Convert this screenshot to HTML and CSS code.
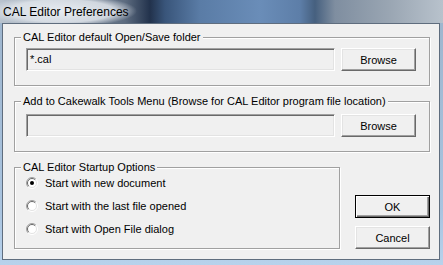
FILE: index.html
```html
<!DOCTYPE html>
<html>
<head>
<meta charset="utf-8">
<link rel="stylesheet" href="styles.css">
</head>
<body>
<div class="window">
  <div class="titlebar"><span class="title">CAL Editor Preferences</span></div>
  <div class="client">
    <div class="group g1">
      <div class="glabel">CAL Editor default Open/Save folder</div>
      <div class="row r1">
        <div class="textbox">*.cal</div>
        <button class="btn">Browse</button>
      </div>
    </div>
    <div class="group g2">
      <div class="glabel">Add to Cakewalk Tools Menu (Browse for CAL Editor program file location)</div>
      <div class="row r2">
        <div class="textbox"></div>
        <button class="btn">Browse</button>
      </div>
    </div>
    <div class="bottom">
      <div class="group g3">
        <div class="glabel">CAL Editor Startup Options</div>
        <div class="radios">
          <div class="radio">
            <svg width="12" height="12" viewBox="0 0 12 12"><circle cx="6" cy="6" r="5" fill="#fff"/><path d="M9.9 2.1A5.5 5.5 0 0 0 2.1 9.9" fill="none" stroke="#a0a0a0"/><path d="M2.1 9.9A5.5 5.5 0 0 0 9.9 2.1" fill="none" stroke="#fff"/><path d="M9.2 2.8A4.5 4.5 0 0 0 2.8 9.2" fill="none" stroke="#696969"/><path d="M2.8 9.2A4.5 4.5 0 0 0 9.2 2.8" fill="none" stroke="#e3e3e3"/><circle cx="6" cy="6" r="2" fill="#000"/></svg>
            <span>Start with new document</span>
          </div>
          <div class="radio">
            <svg width="12" height="12" viewBox="0 0 12 12"><circle cx="6" cy="6" r="5" fill="#fff"/><path d="M9.9 2.1A5.5 5.5 0 0 0 2.1 9.9" fill="none" stroke="#a0a0a0"/><path d="M2.1 9.9A5.5 5.5 0 0 0 9.9 2.1" fill="none" stroke="#fff"/><path d="M9.2 2.8A4.5 4.5 0 0 0 2.8 9.2" fill="none" stroke="#696969"/><path d="M2.8 9.2A4.5 4.5 0 0 0 9.2 2.8" fill="none" stroke="#e3e3e3"/></svg>
            <span>Start with the last file opened</span>
          </div>
          <div class="radio">
            <svg width="12" height="12" viewBox="0 0 12 12"><circle cx="6" cy="6" r="5" fill="#fff"/><path d="M9.9 2.1A5.5 5.5 0 0 0 2.1 9.9" fill="none" stroke="#a0a0a0"/><path d="M2.1 9.9A5.5 5.5 0 0 0 9.9 2.1" fill="none" stroke="#fff"/><path d="M9.2 2.8A4.5 4.5 0 0 0 2.8 9.2" fill="none" stroke="#696969"/><path d="M2.8 9.2A4.5 4.5 0 0 0 9.2 2.8" fill="none" stroke="#e3e3e3"/></svg>
            <span>Start with Open File dialog</span>
          </div>
        </div>
      </div>
      <div class="actions">
        <button class="btn default">OK</button>
        <button class="btn">Cancel</button>
      </div>
    </div>
  </div>
</div>
</body>
</html>
```
FILE: styles.css
```css
html, body {
  margin: 0;
  padding: 0;
}
body {
  width: 443px;
  height: 265px;
  overflow: hidden;
  background: linear-gradient(180deg, #9db4cc 0%, #a9c4e0 80%, #b8d2ec 100%);
  font-family: "Liberation Sans", Arial, sans-serif;
  font-size: 11px;
  color: #000;
}
.window {
  height: 265px;
  display: flex;
  flex-direction: column;
}
.titlebar {
  flex: none;
  height: 23px;
  padding-left: 3px;
  display: flex;
  align-items: center;
  background:
    radial-gradient(ellipse 75px 16px at 62px 11px, rgba(236,240,245,0.95) 0%, rgba(225,230,236,0.85) 70%, rgba(225,230,236,0) 100%),
    linear-gradient(90deg, #b9c3ce 0px, #5d6c80 125px, #22324c 150px, #39557a 165px, #5a7ca6 200px, #6a8db8 260px, #5d7ea8 300px, #46607f 315px, #7f8ea0 335px, #9aa6b3 390px, #b8c2cc 443px);
}
.title {
  font-family: "Liberation Sans", Arial, sans-serif;
  font-size: 12px;
  color: #000;
  line-height: 16px;
}
.client {
  flex: 1;
  margin: 0 3px 5px 2px;
  border: 1px solid #5f6d7e;
  background: #f0f0f0;
  padding: 13px 9px 9px 11px;
}
.group {
  border: 1px solid #a0a0a0;
  box-shadow: inset 1px 1px #fff, 1px 1px #fff;
}
.glabel {
  margin: -7px 0 0 6px;
  padding: 0 2px;
  width: fit-content;
  background: #f0f0f0;
  line-height: 13px;
  white-space: nowrap;
}
.row {
  display: flex;
  align-items: flex-start;
  gap: 6px;
  padding: 0 13px 14px 11px;
}
.r1 { margin-top: 4px; }
.g2 { margin-top: 15px; }
.r2 { margin-top: 6px; }
.textbox {
  box-sizing: border-box;
  width: 309px;
  height: 23px;
  border: 1px solid;
  border-color: #a0a0a0 #fff #fff #a0a0a0;
  box-shadow: inset 1px 1px #696969, inset -1px -1px #e3e3e3;
  background: #f0f0f0;
  padding: 0 3px;
  line-height: 21px;
}
.btn {
  box-sizing: border-box;
  width: 75px;
  height: 23px;
  margin: 0;
  padding: 0;
  font: inherit;
  color: #000;
  background: #f0f0f0;
  border: 1px solid;
  border-color: #fff #696969 #696969 #fff;
  box-shadow: inset -1px -1px #a0a0a0, inset 1px 1px #e3e3e3;
}
.btn.default {
  border-color: #000;
  box-shadow: inset 1px 1px #fff, inset -1px -1px #696969, inset -2px -2px #a0a0a0;
}
.bottom {
  margin-top: 15px;
  display: flex;
  align-items: flex-end;
  justify-content: space-between;
}
.g3 {
  width: 326px;
  box-sizing: border-box;
}
.radios {
  display: flex;
  flex-direction: column;
  gap: 7px;
  margin-top: 1px;
  padding: 0 0 11px 11px;
}
.radio {
  height: 16px;
  display: flex;
  align-items: center;
  gap: 7px;
}
.radio svg {
  flex: none;
  display: block;
}
.actions {
  display: flex;
  flex-direction: column;
  gap: 8px;
  width: 75px;
}
```
